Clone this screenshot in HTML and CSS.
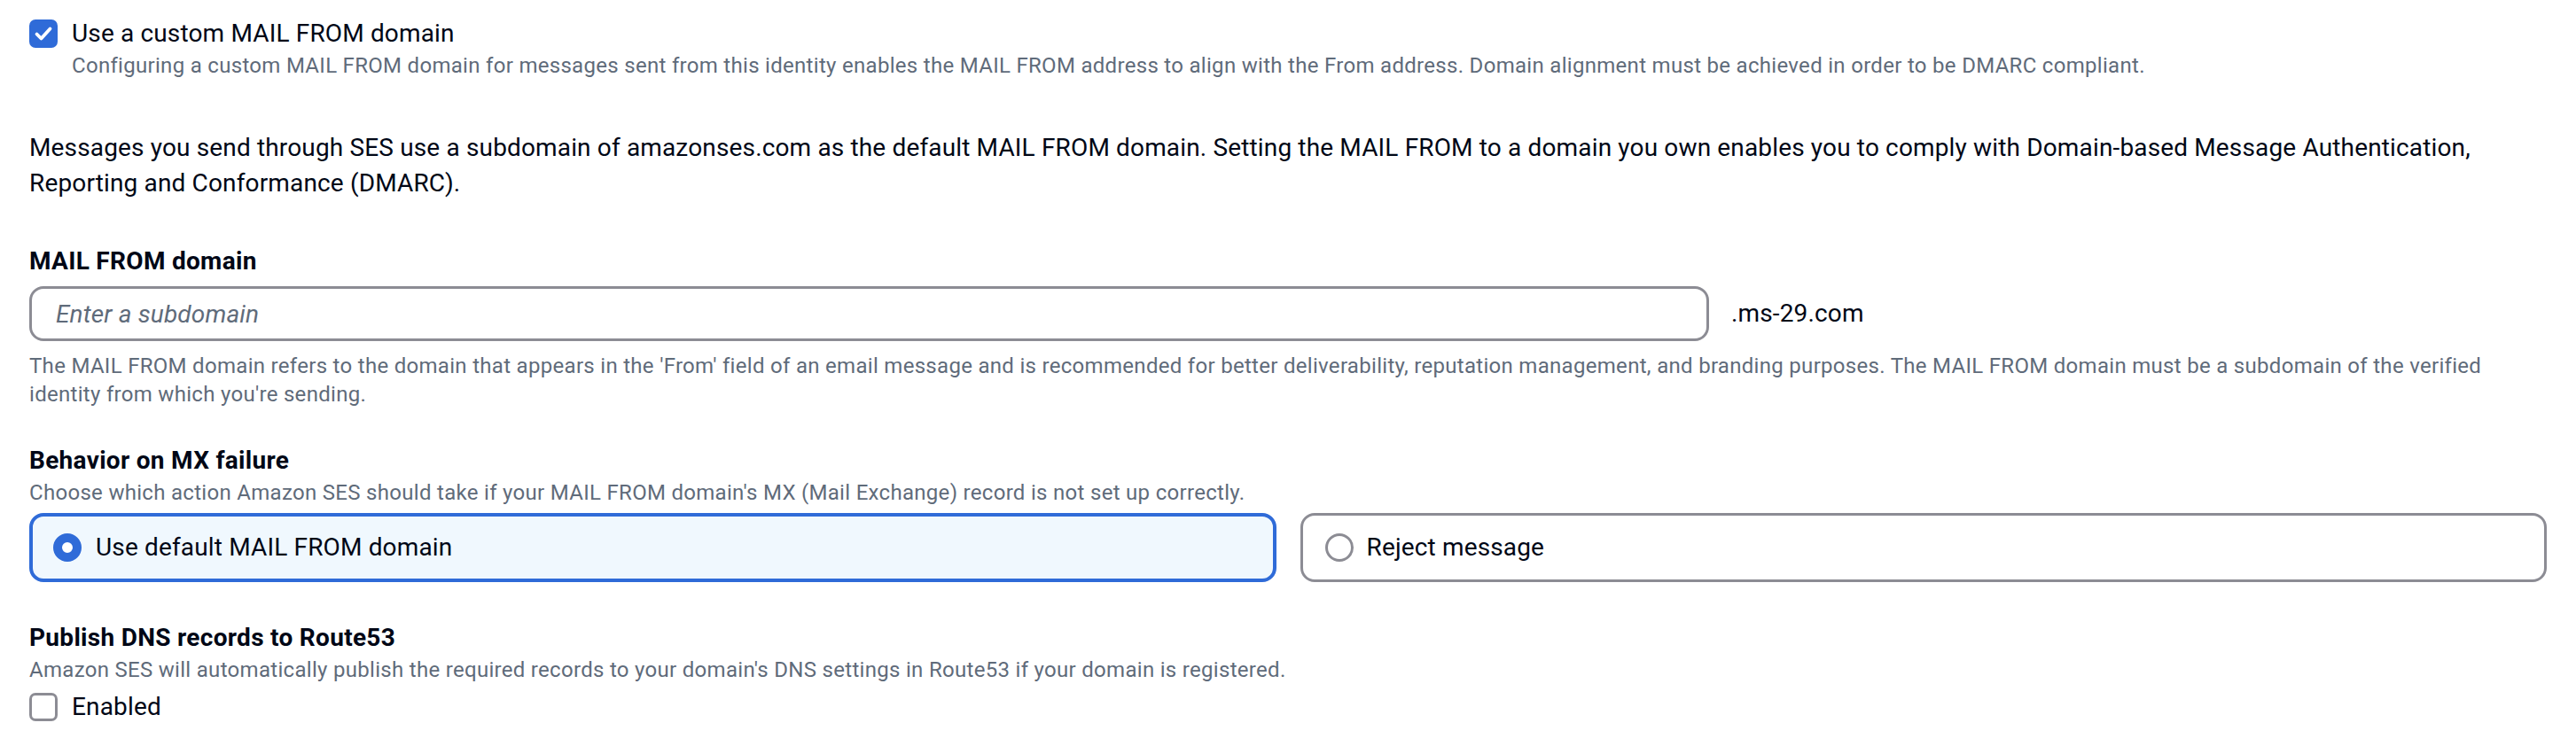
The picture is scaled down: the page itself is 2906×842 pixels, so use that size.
FILE: index.html
```html
<!DOCTYPE html>
<html lang="en">
<head>
<meta charset="utf-8">
<title>MAIL FROM domain</title>
<link rel="stylesheet" href="styles.css">
</head>
<body>
<div class="page">
  <div class="check-row">
    <span class="checkbox checked">
      <svg viewBox="0 0 32 32" width="32" height="32"><path d="M8.5 16.5 L13.5 21.5 L23.5 10.5" fill="none" stroke="#fff" stroke-width="3.8" stroke-linecap="round" stroke-linejoin="round"/></svg>
    </span>
    <div class="check-text">
      <div class="check-label">Use a custom MAIL FROM domain</div>
      <div class="desc">Configuring a custom MAIL FROM domain for messages sent from this identity enables the MAIL FROM address to align with the From address. Domain alignment must be achieved in order to be DMARC compliant.</div>
    </div>
  </div>

  <p class="intro">Messages you send through SES use a subdomain of amazonses.com as the default MAIL FROM domain. Setting the MAIL FROM to a domain you own enables you to comply with Domain-based Message Authentication, Reporting and Conformance (DMARC).</p>

  <div class="field field-domain">
    <div class="field-label">MAIL FROM domain</div>
    <div class="input-row">
      <input class="text-input" type="text" placeholder="Enter a subdomain">
      <span class="suffix">.ms-29.com</span>
    </div>
    <div class="desc desc-after-input">The MAIL FROM domain refers to the domain that appears in the 'From' field of an email message and is recommended for better deliverability, reputation management, and branding purposes. The MAIL FROM domain must be a subdomain of the verified identity from which you're sending.</div>
  </div>

  <div class="field field-mx">
    <div class="field-label">Behavior on MX failure</div>
    <div class="desc">Choose which action Amazon SES should take if your MAIL FROM domain's MX (Mail Exchange) record is not set up correctly.</div>
    <div class="tiles">
      <div class="tile selected">
        <span class="radio on"></span>
        <span class="tile-label">Use default MAIL FROM domain</span>
      </div>
      <div class="tile">
        <span class="radio"></span>
        <span class="tile-label">Reject message</span>
      </div>
    </div>
  </div>

  <div class="field field-dns">
    <div class="field-label">Publish DNS records to Route53</div>
    <div class="desc">Amazon SES will automatically publish the required records to your domain's DNS settings in Route53 if your domain is registered.</div>
    <div class="check-row enabled-row">
      <span class="checkbox"></span>
      <span class="check-label">Enabled</span>
    </div>
  </div>
</div>
</body>
</html>
```

FILE: styles.css
```css
* { box-sizing: border-box; }

html, body {
  margin: 0;
  padding: 0;
  background: #ffffff;
}

body {
  font-family: "Roboto", "Open Sans", sans-serif;
  color: #000716;
  font-size: 28px;
  line-height: 40px;
  letter-spacing: 0.15px;
}

.page {
  padding: 18px 33px 0 33px;
}

.check-row {
  display: flex;
  align-items: flex-start;
  gap: 16px;
}

.checkbox {
  flex: 0 0 auto;
  width: 32px;
  height: 32px;
  margin-top: 4px;
  border-radius: 7px;
  border: 3px solid #8c8c94;
  background: #ffffff;
  display: block;
}

.checkbox.checked {
  border: none;
  background: #2f6bd8;
}

.checkbox svg { display: block; }

.check-label {
  font-size: 28px;
  line-height: 40px;
  color: #000716;
}

.desc {
  font-size: 24px;
  line-height: 32px;
  color: #5f6b7a;
  letter-spacing: 0.3px;
}

.intro {
  margin: 57px 0 0 0;
  font-size: 28px;
  line-height: 40px;
  color: #000716;
}

.field-label {
  font-weight: 700;
  font-size: 28px;
  line-height: 40px;
  color: #000716;
  letter-spacing: 0.3px;
}

.field-domain { margin-top: 48px; }

.input-row {
  display: flex;
  align-items: center;
  gap: 25px;
  margin-top: 8px;
}

.text-input {
  width: 1895px;
  height: 62px;
  border: 3px solid #8c8c94;
  border-radius: 16px;
  padding: 0 27px;
  font-family: inherit;
  font-size: 28px;
  letter-spacing: 0.15px;
  color: #000716;
  background: #ffffff;
  outline: none;
}

.text-input::placeholder {
  color: #5f6b7a;
  font-style: italic;
  opacity: 1;
}

.suffix {
  font-size: 28px;
  line-height: 40px;
  color: #000716;
}

.desc-after-input {
  margin-top: 12px;
  max-width: 2800px;
}

.field-mx { margin-top: 39px; }

.tiles {
  display: grid;
  grid-template-columns: 1fr 1fr;
  gap: 27px;
  margin-top: 7px;
}

.tile {
  display: flex;
  align-items: center;
  gap: 15px;
  height: 78px;
  border: 3px solid #8c8c94;
  border-radius: 16px;
  padding: 0 25px;
  background: #ffffff;
}

.tile.selected {
  border: 4px solid #2f6bd8;
  background: #f0f8fe;
  padding: 0 23px;
  gap: 16px;
}

.radio {
  flex: 0 0 auto;
  width: 32px;
  height: 32px;
  border-radius: 50%;
  border: 3px solid #8c8c94;
  background: #ffffff;
}

.radio.on {
  border: 10px solid #2f6bd8;
  background: #ffffff;
}

.tile-label {
  font-size: 28px;
  line-height: 40px;
  color: #000716;
}

.field-dns { margin-top: 43px; }

.enabled-row {
  margin-top: 6px;
}
```
